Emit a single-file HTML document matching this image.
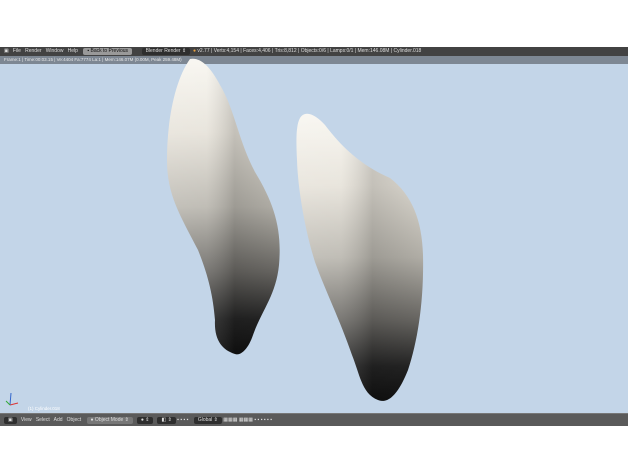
<!DOCTYPE html>
<html><head><style>
body{margin:0;width:628px;height:472px;background:#fff;position:relative;overflow:hidden;font-family:"Liberation Sans",sans-serif}
.top{position:absolute;left:0;top:47px;width:628px;height:9px;background:#424242;color:#ddd;font-size:5px;line-height:9px;white-space:nowrap}
.info{position:absolute;left:0;top:56px;width:628px;height:8px;background:#7d8793;color:#e8e8e8;font-size:4.5px;line-height:8px;white-space:nowrap}
.vp{position:absolute;left:0;top:64px;width:628px;height:349px;background:#c3d5e8}
.bot{position:absolute;left:0;top:413px;width:628px;height:12px;background:#5a5a5a;border-top:1px solid #777;color:#ddd;font-size:5px;line-height:12px;white-space:nowrap}
.b{display:inline-block;background:#2e2e2e;border-radius:2px;padding:0 4px;line-height:7px;margin-left:4px}
</style></head><body>
<div class="top"><span style="margin-left:4px">▣</span> &nbsp; File &nbsp; Render &nbsp; Window &nbsp; Help <span class="b" style="background:#999;color:#111">▪ Back to Previous</span> &nbsp;&nbsp;&nbsp;<span class="b">Blender Render ⇕</span> &nbsp;<span style="color:#e8a040">●</span> v2.77 | Verts:4,154 | Faces:4,406 | Tris:8,812 | Objects:0/6 | Lamps:0/1 | Mem:146.08M | Cylinder.018</div>
<div class="info"><span style="margin-left:4px">Frame:1 | Time:00:03.15 | Ve:4404 Fa:7774 La:1 | Mem:146.07M (0.00M, Peak 259.48M)</span></div>
<div class="vp"></div>
<svg width="628" height="472" style="position:absolute;left:0;top:0">
<defs>
<linearGradient id="g" x1="0" y1="0" x2="0" y2="1">
<stop offset="0" stop-color="#f8f6f0"/><stop offset="0.25" stop-color="#e6e2d9"/><stop offset="0.5" stop-color="#b9b6ae"/><stop offset="0.72" stop-color="#6b6965"/><stop offset="0.88" stop-color="#252525"/><stop offset="1" stop-color="#111"/>
</linearGradient>
<linearGradient id="h" x1="0" y1="0" x2="1" y2="0">
<stop offset="0" stop-color="#fff" stop-opacity="0.15"/><stop offset="0.35" stop-color="#fff" stop-opacity="0.1"/><stop offset="0.6" stop-color="#000" stop-opacity="0.15"/><stop offset="1" stop-color="#000" stop-opacity="0.05"/>
</linearGradient>
<path id="t1" d="M190 59 C200 57 210 66 220 85 C235 110 238 140 255 172 C275 205 282 230 279 265 C276 295 262 310 253 335 C248 350 240 356 235 354 C222 350 214 340 215 320 C213 295 208 275 198 250 C180 215 167 195 167 160 C167 120 175 80 190 59 Z"/>
<path id="t2" d="M300 118 C305 110 315 114 325 125 C340 145 360 165 390 178 C412 195 422 220 423 255 C424 300 418 340 408 370 C398 395 388 404 378 400 C362 394 360 375 352 355 C340 320 325 290 315 262 C305 230 298 190 297 160 C296 140 296 125 300 118 Z"/>
</defs>
<use href="#t1" fill="url(#g)"/><use href="#t1" fill="url(#h)"/>
<use href="#t2" fill="url(#g)"/><use href="#t2" fill="url(#h)"/>
<line x1="10" y1="405" x2="18" y2="403" stroke="#d33" stroke-width="1"/>
<line x1="10" y1="405" x2="11" y2="393" stroke="#36c" stroke-width="1"/>
<line x1="10" y1="405" x2="6" y2="401" stroke="#3a3" stroke-width="1"/>
<text x="28" y="410" font-size="4.5" fill="#fff" font-family="Liberation Sans">(1) Cylinder.018</text>
</svg>
<div class="bot"><span style="margin-left:4px" class="b">▣</span> &nbsp; View &nbsp; Select &nbsp; Add &nbsp; Object <span class="b" style="background:#777">● Object Mode ⇕</span><span class="b">● ⇕</span><span class="b">◧ ⇕</span> ▪ ▪ ▪ ▪ <span class="b">Global ⇕</span> ▦▦▦ ▦▦▦ ▪ ▪ ▪ ▪ ▪ ▪</div>
</body></html>
